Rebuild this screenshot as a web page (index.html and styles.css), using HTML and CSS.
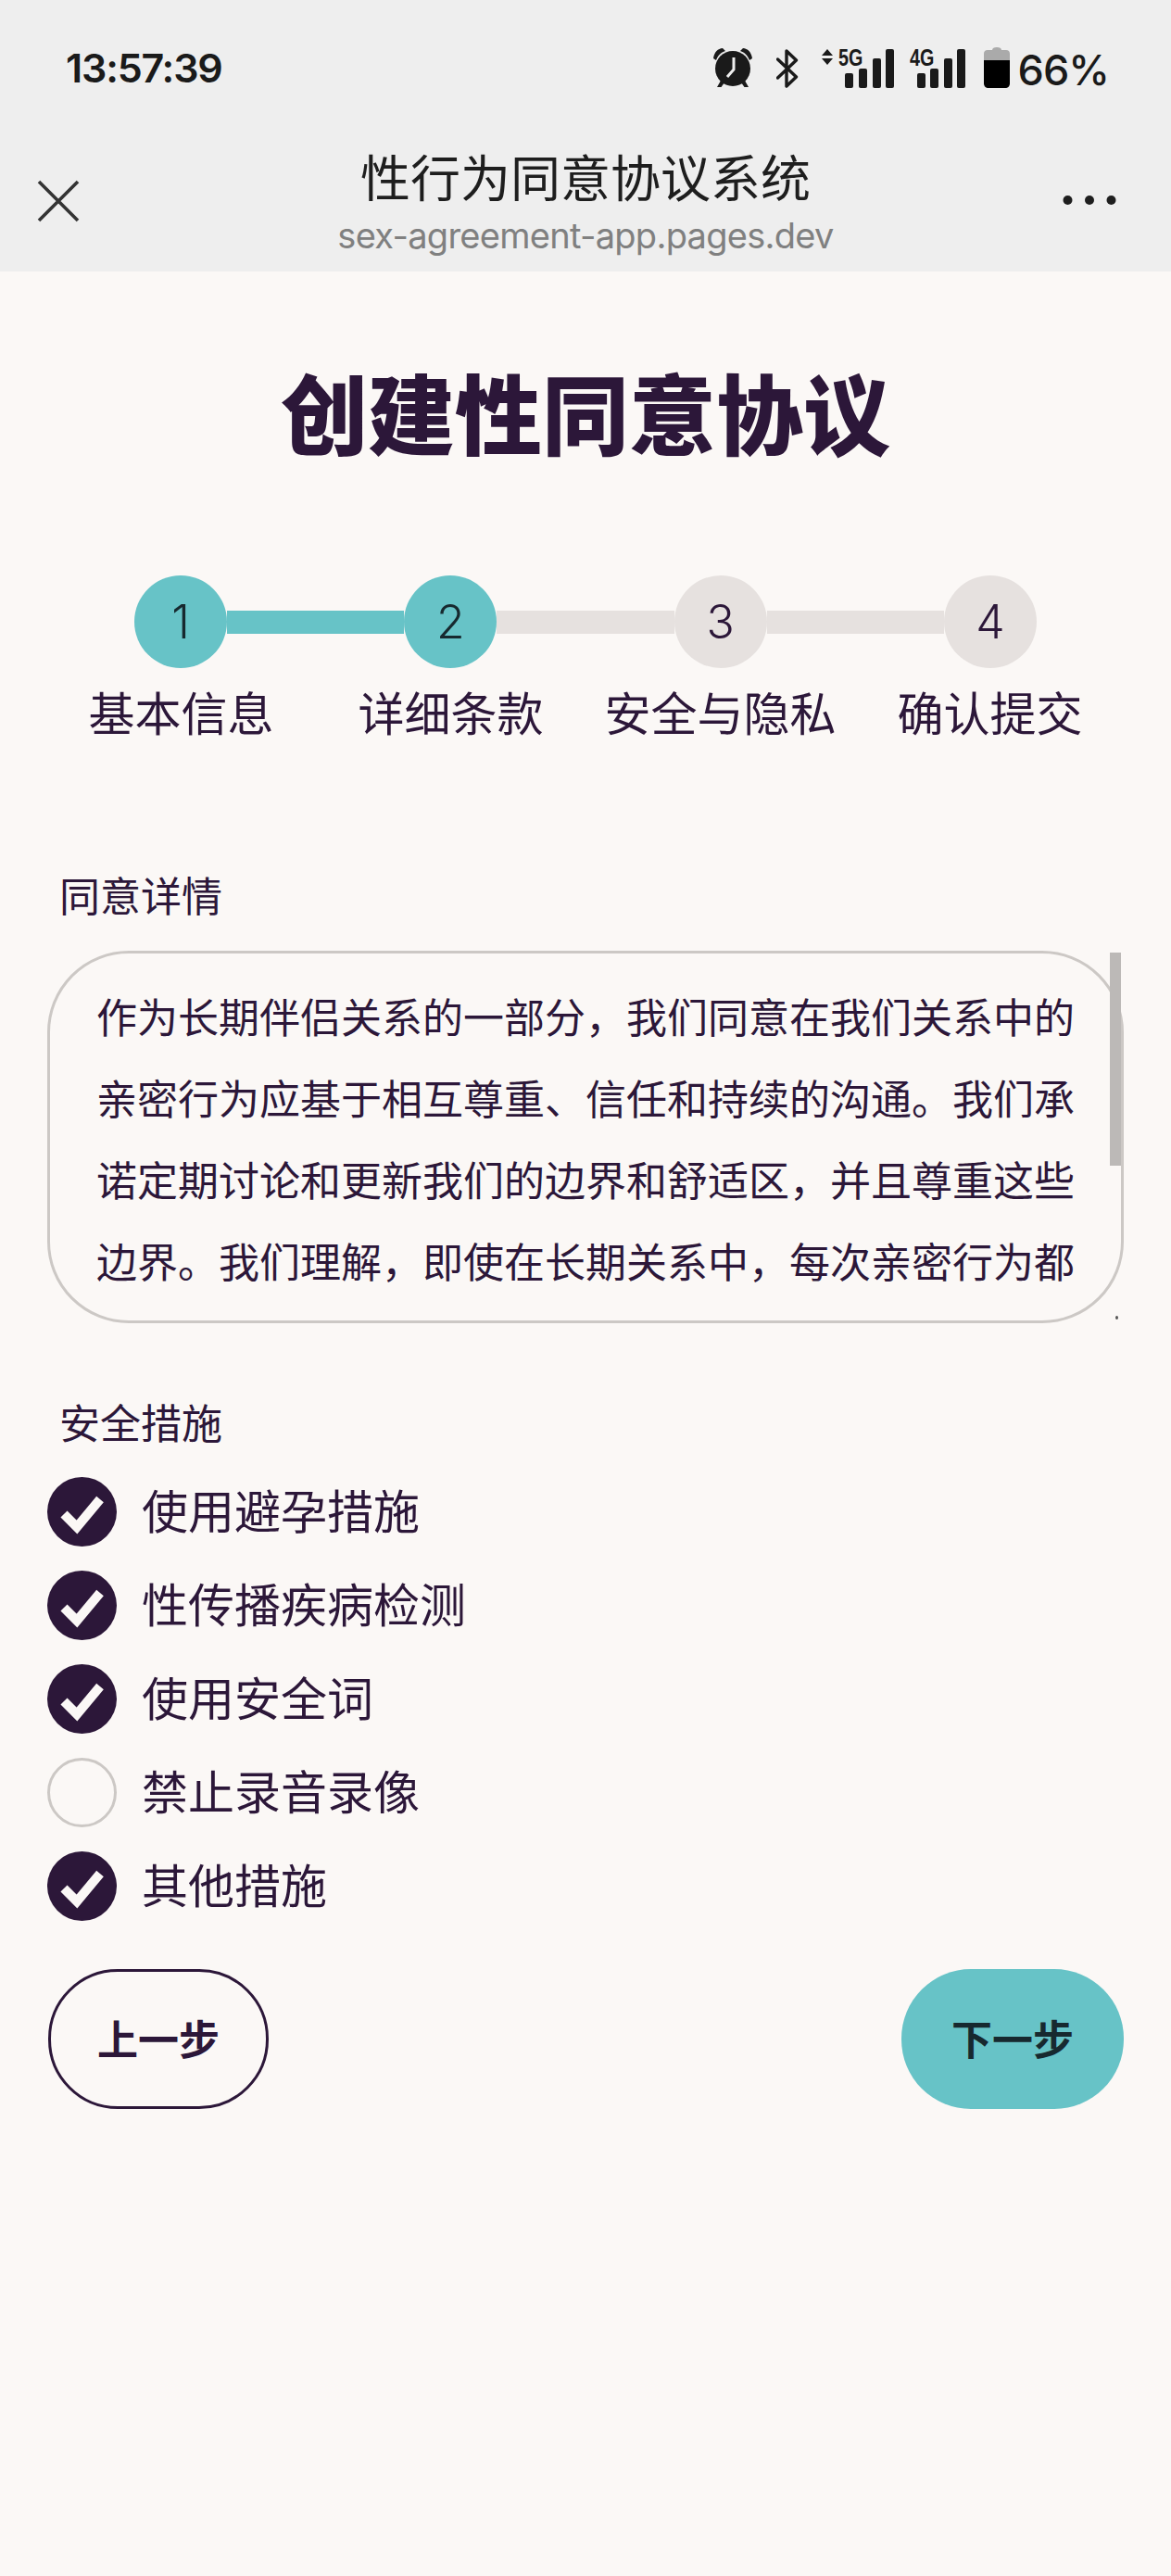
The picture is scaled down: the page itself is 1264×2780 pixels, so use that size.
FILE: index.html
```html
<!DOCTYPE html>
<html lang="zh-CN">
<head>
<meta charset="utf-8">
<title>创建性同意协议</title>
<link rel="stylesheet" href="styles.css">
</head>
<body>
<header class="chrome">
  <div class="status">
    <span class="time">13:57:39</span>
    <div class="status-icons">
      <svg class="i-alarm" width="44" height="44" viewBox="0 0 44 44"><path d="M1 12 C2 5 6 1.500 11 1 L14 4 C9 5.500 6 9 4 14 Z M43 12 C42 5 38 1.500 33 1 L30 4 C35 5.500 38 9 40 14 Z" fill="#1a1a1a"/><circle cx="22" cy="23" r="19" fill="#1a1a1a"/><path d="M9 36 L5 43 H9.500 L13 38 Z M35 36 L39 43 H34.500 L31 38 Z" fill="#1a1a1a"/><path d="M23 11 V24 L16 32" fill="none" stroke="#eeeeee" stroke-width="3"/></svg>
      <svg class="i-bt" width="24" height="42" viewBox="0 0 24 42"><path d="M1.500 11 L21.500 30 L11 40 V2 L21.500 12 L1.500 31" fill="none" stroke="#1a1a1a" stroke-width="3.400" stroke-linejoin="round" stroke-linecap="round"/></svg>
      <div class="sig sig-5g">
        <svg class="updown" width="12" height="17" viewBox="0 0 12 17"><path d="M6 0 L12 7 H0 Z M0 10 H12 L6 17 Z" fill="#1a1a1a"/></svg>
        <span class="net net-5g">5G</span>
        <svg class="bars" width="53" height="42" viewBox="0 0 53 42"><rect x="0" y="26" width="9" height="16" rx="2"/><rect x="15" y="21" width="9" height="21" rx="2"/><rect x="30" y="10" width="9" height="32" rx="2"/><rect x="44" y="0" width="9" height="42" rx="2"/></svg>
      </div>
      <div class="sig sig-4g">
        <span class="net net-4g">4G</span>
        <svg class="bars" width="52" height="42" viewBox="0 0 52 42"><rect x="0" y="26" width="9" height="16" rx="2"/><rect x="14" y="21" width="9" height="21" rx="2"/><rect x="29" y="10" width="9" height="32" rx="2"/><rect x="43" y="0" width="9" height="42" rx="2"/></svg>
      </div>
      <svg class="i-batt" width="28" height="44" viewBox="0 0 28 44"><path d="M9 3 C9 1 11 0 14 0 C17 0 19 1 19 3 H24 C26.500 3 28 4.500 28 7 V14 H0 V7 C0 4.500 1.500 3 4 3 Z" fill="#aaaaaa"/><path d="M0 14 H28 V39 C28 42 26 44 23 44 H5 C2 44 0 42 0 39 Z" fill="#000"/></svg>
      <span class="pct">66%</span>
    </div>
  </div>
  <div class="nav">
    <svg class="close" width="46" height="46" viewBox="0 0 46 46"><path d="M2 2 L44 44 M44 2 L2 44" stroke="#333" stroke-width="3.600" fill="none"/></svg>
    <div class="nav-title">
      <div class="app-name">性行为同意协议系统</div>
      <div class="app-url">sex-agreement-app.pages.dev</div>
    </div>
    <svg class="more" width="58" height="12" viewBox="0 0 58 12"><circle cx="5.500" cy="6" r="5"/><circle cx="29" cy="6" r="5"/><circle cx="52.500" cy="6" r="5"/></svg>
  </div>
</header>

<main class="page">
  <h1 class="heading">创建性同意协议</h1>

  <section class="stepper">
    <div class="track">
      <span class="dot dot-on">1</span>
      <span class="link link-on"></span>
      <span class="dot dot-on">2</span>
      <span class="link"></span>
      <span class="dot">3</span>
      <span class="link"></span>
      <span class="dot">4</span>
    </div>
    <div class="labels">
      <span>基本信息</span>
      <span>详细条款</span>
      <span>安全与隐私</span>
      <span>确认提交</span>
    </div>
  </section>

  <section class="form">
    <div class="field-label">同意详情</div>
    <div class="textwrap">
      <div class="textbox">作为长期伴侣关系的一部分，我们同意在我们关系中的亲密行为应基于相互尊重、信任和持续的沟通。我们承诺定期讨论和更新我们的边界和舒适区，并且尊重这些边界。我们理解，即使在长期关系中，每次亲密行为都</div>
      <span class="scrollbar"></span>
      <span class="grip"></span>
    </div>

    <div class="field-label field-label-2">安全措施</div>
    <ul class="checks">
      <li class="check"><svg class="tick" width="75" height="75" viewBox="0 0 75 75"><circle cx="37.500" cy="37.500" r="37.500"/><path d="M18 40 L32 54 L57 24" /></svg><span class="check-text">使用避孕措施</span></li>
      <li class="check"><svg class="tick" width="75" height="75" viewBox="0 0 75 75"><circle cx="37.500" cy="37.500" r="37.500"/><path d="M18 40 L32 54 L57 24" /></svg><span class="check-text">性传播疾病检测</span></li>
      <li class="check"><svg class="tick" width="75" height="75" viewBox="0 0 75 75"><circle cx="37.500" cy="37.500" r="37.500"/><path d="M18 40 L32 54 L57 24" /></svg><span class="check-text">使用安全词</span></li>
      <li class="check"><span class="untick"></span><span class="check-text">禁止录音录像</span></li>
      <li class="check"><svg class="tick" width="75" height="75" viewBox="0 0 75 75"><circle cx="37.500" cy="37.500" r="37.500"/><path d="M18 40 L32 54 L57 24" /></svg><span class="check-text">其他措施</span></li>
    </ul>

    <div class="actions">
      <button class="btn btn-prev" type="button">上一步</button>
      <button class="btn btn-next" type="button">下一步</button>
    </div>
  </section>
</main>
</body>
</html>
```
FILE: styles.css
```css
* { box-sizing: border-box; }
html, body { margin: 0; padding: 0; }
body {
  background: #fbf8f6;
  color: #2c1739;
  font-family: "Noto Sans CJK SC", "Noto Sans", sans-serif;
  min-height: 2780px;
}

/* browser chrome */
.chrome { background: #eeeeee; height: 293px; }
.status {
  display: flex;
  justify-content: space-between;
  height: 104px;
  padding: 51px 67px 0 71px;
}
.time {
  font-family: "Inter", sans-serif;
  font-weight: 600;
  font-size: 43px;
  line-height: 44px;
  letter-spacing: -1.200px;
  color: #1a1a1a;
}
.status-icons { display: flex; align-items: flex-start; }
.i-alarm { margin-right: 25px; flex: none; }
.i-bt { margin-top: 2px; margin-right: 25px; flex: none; }
.sig { position: relative; height: 44px; flex: none; }
.bars { display: block; fill: #1a1a1a; position: absolute; bottom: 0; right: 0; }
.sig-5g { width: 78px; margin-right: 17px; }
.sig-4g { width: 60px; margin-right: 20px; }
.updown { position: absolute; left: 0; top: 2px; }
.net {
  position: absolute;
  top: -1px;
  font-family: "Liberation Sans", sans-serif;
  font-weight: 700;
  font-size: 26px;
  line-height: 24px;
  color: #1a1a1a;
  transform: scaleX(.76);
  transform-origin: left top;
}
.net-5g { left: 18px; }
.net-4g { left: 0; }
.i-batt { margin-right: 9px; flex: none; }
.pct {
  font-family: "Inter", sans-serif;
  font-weight: 500;
  font-size: 45px;
  line-height: 44px;
  margin-top: 3px;
  letter-spacing: -1px;
  color: #1a1a1a;
}
.nav {
  display: grid;
  grid-template-columns: 1fr auto 1fr;
  height: 189px;
  padding: 0 40px;
}
.close { margin-top: 90px; }
.nav-title { text-align: center; padding-top: 48px; }
.app-name { font-size: 54px; line-height: 76px; color: #1e1e1e; }
.app-url {
  font-family: "Inter", sans-serif;
  font-size: 38px;
  line-height: 50px;
  letter-spacing: -.72px;
  color: #808080;
  margin-top: 1px;
}
.more { justify-self: end; margin: 106px 19px 0 0; fill: #1e1e1e; }

/* page */
.page { padding: 0 52px; }
.heading {
  margin: 0;
  padding-top: 89px;
  height: 328px;
  text-align: center;
  font-size: 94px;
  line-height: 122px;
  font-weight: 900;
}

/* stepper */
.track {
  display: flex;
  align-items: center;
  padding: 0 93px;
}
.dot {
  flex: none;
  width: 100px;
  height: 100px;
  border-radius: 50%;
  background: #e6e1df;
  display: flex;
  align-items: center;
  justify-content: center;
  font-family: "Inter", sans-serif;
  font-weight: 300;
  font-size: 50px;
  color: #2c1739;
}
.dot-on { background: #67c3c7; color: #17292f; }
.link { flex: 1; height: 25px; background: #e6e1df; }
.link-on { background: #67c3c7; }
.labels {
  display: grid;
  grid-template-columns: repeat(4, 291px);
  margin: 10px -2px 0;
  text-align: center;
  font-size: 50px;
  line-height: 72px;
}

/* form */
.field-label { font-size: 44px; line-height: 64px; margin: 130px 0 0 12px; }
.textwrap { position: relative; margin: 29px -1px 0; }
.textbox {
  height: 402px;
  border: 3px solid #ccc8c5;
  border-radius: 88px;
  padding: 23px 40px 0 50px;
  font-size: 44px;
  line-height: 88px;
}
.scrollbar {
  position: absolute;
  right: 3px;
  top: 2px;
  width: 12px;
  height: 230px;
  background: #bcb9b7;
}
.grip {
  position: absolute;
  right: 6px;
  bottom: 4px;
  width: 3px;
  height: 4px;
  background: #555;
  border-radius: 50%;
}
.field-label-2 { margin-top: 74px; }
.checks {
  list-style: none;
  margin: 28px 0 0 -1px;
  padding: 0;
  display: flex;
  flex-direction: column;
  gap: 26px;
}
.check {
  display: flex;
  align-items: center;
  gap: 27px;
  font-size: 50px;
  line-height: 75px;
  height: 75px;
}
.check-text { margin-bottom: 6px; }
.tick { flex: none; fill: #2c1739; }
.tick path { fill: none; stroke: #fbf8f6; stroke-width: 10; stroke-linejoin: miter; }
.untick {
  flex: none;
  width: 75px;
  height: 75px;
  border-radius: 50%;
  border: 3px solid #ccc8c5;
}
.actions {
  display: flex;
  justify-content: space-between;
  margin: 52px -1px 0 0;
}
.btn {
  height: 151px;
  border-radius: 75px;
  font-family: "Noto Sans CJK SC", sans-serif;
  font-size: 44px;
  font-weight: 700;
  padding: 0 0 3px;
}
.btn-prev { width: 238px; background: transparent; border: 3px solid #2c1739; color: #2c1739; }
.btn-next { width: 240px; background: #67c3c7; border: 0; color: #17292f; }
```
